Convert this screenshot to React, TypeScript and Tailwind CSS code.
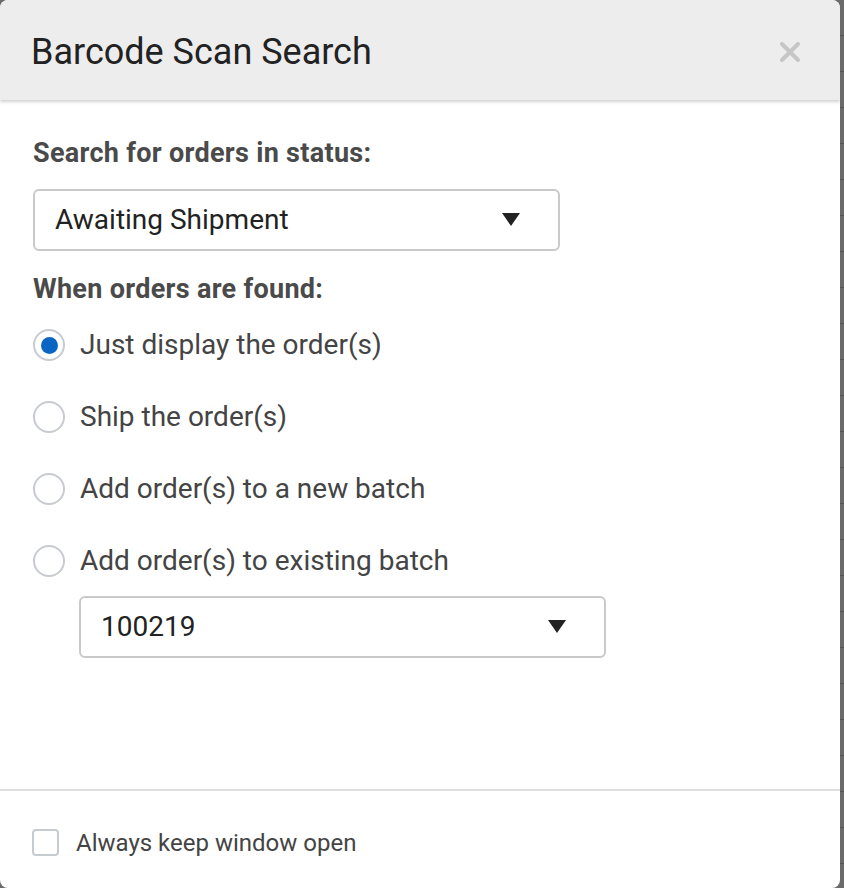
import { useState } from 'react'

const options = [
  'Just display the order(s)',
  'Ship the order(s)',
  'Add order(s) to a new batch',
  'Add order(s) to existing batch',
]

function Caret() {
  return (
    <svg width="18" height="14" viewBox="0 0 18 14" className="shrink-0">
      <path d="M0 0 L18 0 L9 13 Z" fill="#222" />
    </svg>
  )
}

function SelectBox({ value, className }: { value: string; className: string }) {
  return (
    <div
      className={`h-[62px] flex items-center justify-between pl-[20px] pr-[38px] border-2 border-[#c9c9c9] rounded-[6px] text-[28px] text-[#222] ${className}`}
    >
      <span>{value}</span>
      <Caret />
    </div>
  )
}

export default function App() {
  const [selected, setSelected] = useState(0)
  const [keepOpen, setKeepOpen] = useState(false)

  return (
    <div
      className="w-[844px] h-[888px] bg-[#6b6b6b] bg-[repeating-linear-gradient(to_bottom,#6b6b6b_0px,#6b6b6b_35px,#555_35px,#555_36px)] flex overflow-hidden"
      style={{ fontFamily: 'Roboto, "Liberation Sans", sans-serif' }}
    >
      <div className="w-[840px] h-[888px] bg-white rounded-[8px] flex flex-col overflow-hidden shrink-0">
        <div className="h-[100px] bg-[#ededed] flex items-center justify-between pl-[31px] pr-[40px] pt-[3px] shadow-[0_2px_3px_rgba(0,0,0,0.18)] relative z-10">
          <h1 className="text-[36px] text-[#222] leading-none">Barcode Scan Search</h1>
          <button className="w-[20px] h-[20px]">
            <svg width="20" height="20" viewBox="0 0 20 20">
              <path d="M2 2 L18 18 M18 2 L2 18" stroke="#c6c6c6" strokeWidth="4" strokeLinecap="round" />
            </svg>
          </button>
        </div>

        <div className="flex-1 pl-[33px] pt-[40px]">
          <div className="text-[27px] font-bold text-[#4a4a4a] leading-none tracking-[0.3px]">Search for orders in status:</div>
          <SelectBox value="Awaiting Shipment" className="w-[527px] mt-[22px]" />
          <div className="text-[27px] font-bold text-[#4a4a4a] leading-none tracking-[0.3px] mt-[25px]">When orders are found:</div>

          <div className="flex flex-col mt-[6px]">
            {options.map((label, i) => (
              <label
                key={label}
                className="h-[72px] flex items-center gap-[15px] cursor-pointer"
                onClick={() => setSelected(i)}
              >
                <span className="w-[32px] h-[32px] rounded-full border-2 border-[#c7cbcf] flex items-center justify-center shrink-0">
                  {selected === i && <span className="w-[17px] h-[17px] rounded-full bg-[#0b66c3]" />}
                </span>
                <span className="text-[28px] text-[#444]">{label}</span>
              </label>
            ))}
          </div>
          <SelectBox value="100219" className="w-[527px] ml-[46px] -mt-[1px]" />
        </div>

        <div className="h-[99px] border-t-2 border-[#dedede] flex items-center pl-[32px] gap-[17px] pt-[6px]">
          <span
            className="w-[27px] h-[27px] rounded-[4px] border-2 border-[#c5cbd0] shrink-0 cursor-pointer"
            onClick={() => setKeepOpen(!keepOpen)}
          />
          <span className="text-[24px] text-[#444]">Always keep window open</span>
        </div>
      </div>
    </div>
  )
}
